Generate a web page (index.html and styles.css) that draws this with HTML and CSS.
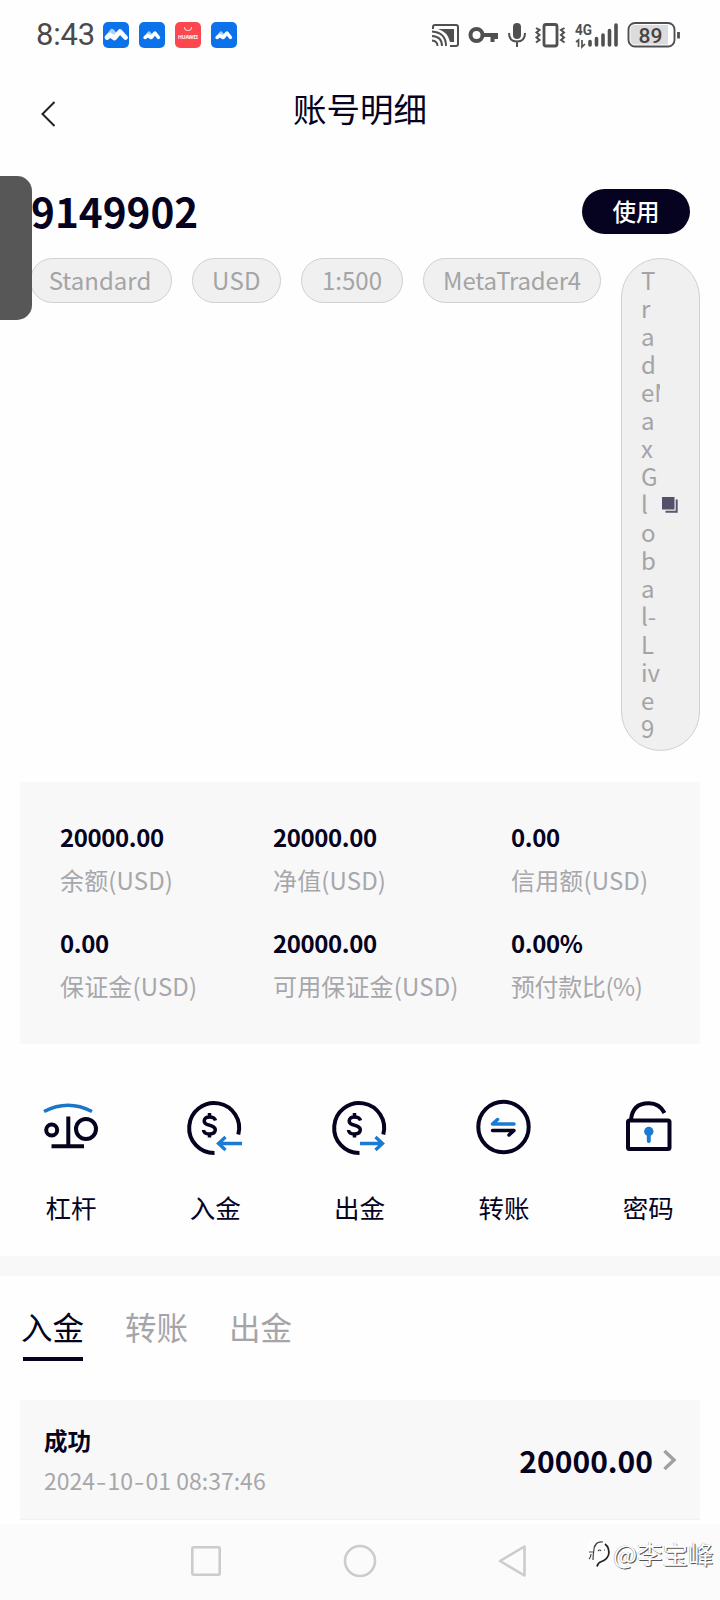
FILE: index.html
```html
<!DOCTYPE html>
<html lang="zh-CN">
<head>
<meta charset="utf-8">
<title>账号明细</title>
<link rel="stylesheet" href="styles.css">
</head>
<body>
<div class="screen">
  <div class="status">
    <span class="clock">8:43</span>
    <div class="apps">
      <svg width="26" height="26" viewBox="0 0 26 26"><rect width="26" height="26" rx="5" fill="#0b72ea"/><path d="M4.500 15 9 9.500l4 4.500" fill="none" stroke="#a9d2fb" stroke-width="5" stroke-linejoin="round" stroke-linecap="round"/><path d="M4 15.500 7 13l4.500 3 5.500-6.500 5.500 6" fill="none" stroke="#fff" stroke-width="4.800" stroke-linejoin="round" stroke-linecap="round"/></svg>
      <svg width="26" height="26" viewBox="0 0 26 26"><rect width="26" height="26" rx="5" fill="#0b72ea"/><path d="M6.500 15.500 10 11l3 4" fill="none" stroke="#a9d2fb" stroke-width="3.200" stroke-linejoin="round" stroke-linecap="round"/><path d="M6 15.500 8.500 13.500l3.500 2 4-4.500 3.500 4.500" fill="none" stroke="#fff" stroke-width="3.400" stroke-linejoin="round" stroke-linecap="round"/></svg>
      <svg width="26" height="26" viewBox="0 0 26 26"><rect width="26" height="26" rx="5" fill="#fb474d"/><path d="M9.500 5a3.500 3.500 0 0 0 7 0" fill="none" stroke="#ffd0d0" stroke-width="1.100"/><text class="huawei" x="3" y="17" textLength="20">HUAWEI</text></svg>
      <svg width="26" height="26" viewBox="0 0 26 26"><rect width="26" height="26" rx="5" fill="#0b72ea"/><path d="M6.500 15.500 10 11l3 4" fill="none" stroke="#a9d2fb" stroke-width="3.200" stroke-linejoin="round" stroke-linecap="round"/><path d="M6 15.500 8.500 13.500l3.500 2 4-4.500 3.500 4.500" fill="none" stroke="#fff" stroke-width="3.400" stroke-linejoin="round" stroke-linecap="round"/></svg>
    </div>
    <svg class="system" width="252" height="32" viewBox="430 18 252 32">
      <g fill="none" stroke="#505050" stroke-width="2">
        <path d="M433 28v-2q0-2 2-2h21q2 0 2 2v17q0 2-2 2h-6"/>
        <path d="M432 30.500q14 1 14 14.500M432 35q10 .5 10 10M432 39.500q5.500 .5 5.500 5.500" stroke-width="1.900"/>
        <path d="M438 28h16v13h-4q-2-10-12-13z" fill="#505050" stroke="none"/>
        <circle cx="476.500" cy="34" r="6" stroke-width="4"/>
        <path d="M482 34h16M492.500 34v7M496 34v4" stroke-width="4"/>
        <rect x="513" y="22" width="8" height="16" rx="4" fill="#505050" stroke="none"/>
        <path d="M509 32q0 8.500 8 8.500t8-8.500M517 40v6" stroke-width="2"/>
        <rect x="544" y="23.500" width="13" height="21.500" rx="2" stroke-width="2.800"/>
        <path d="M536 27l3.500 2-3 2.500 3 2.500-3 2.500 3 2.500-3.500 2.500M564.500 27l-3.500 2 3 2.500-3 2.500 3 2.500-3 2.500 3.500 2.500" stroke-width="2"/>
        <path d="M576 41l2.500-2v7M582 39v7l3-3" stroke-width="1.700"/>
        <path d="M590 40.500v3.500M596.500 37.500v6.500M603 34v10M609.500 29.500v14.500M616 24v20" stroke-width="3.600" stroke-linecap="round"/>
        <rect x="628.500" y="22" width="46" height="23.500" rx="6.500" fill="#fff" stroke-width="1.900"/>
        <path d="M635 24h33v19.500h-33q-4.500 0-4.500-4.500V28.500q0-4.500 4.500-4.500z" fill="#dcdcdc" stroke="none"/>
        <path d="M678.500 31v6.500" stroke-width="2.800"/>
      </g>
      <text class="net" x="575" y="34" textLength="17" lengthAdjust="spacingAndGlyphs">4G</text>
      <text class="battery" x="638.500" y="41.500" textLength="24">89</text>
    </svg>
  </div>

  <div class="header">
    <svg class="back" width="20" height="28" viewBox="0 0 20 28"><path d="M16.500 2 4.500 14l12 12" fill="none" stroke="#222" stroke-width="2"/></svg>
    <h1 class="title">账号明细</h1>
  </div>

  <div class="account">
    <div class="account-no">9149902</div>
    <button class="use">使用</button>
  </div>

  <div class="chips">
    <span class="chip chip-type">Standard</span>
    <span class="chip chip-cur">USD</span>
    <span class="chip chip-lev">1:500</span>
    <span class="chip chip-platform">MetaTrader4</span>
    <div class="chip chip-server">
      <div class="server">T<br>r<br>a<br>d<br>eM<br>a<br>x<br>G<br>l<br>o<br>b<br>a<br>l-<br>L<br>iv<br>e<br>9</div>
      <svg class="copy" width="17" height="17" viewBox="0 0 17 17"><path d="M0 0h12.500v12.500H0z" fill="#555069"/><path d="M14.700 2.500v12.200H3.500" fill="none" stroke="#5b5670" stroke-width="2"/></svg>
    </div>
  </div>

  <div class="stats">
    <div class="stat"><b>20000.00</b><span>余额(USD)</span></div>
    <div class="stat"><b>20000.00</b><span>净值(USD)</span></div>
    <div class="stat"><b>0.00</b><span>信用额(USD)</span></div>
    <div class="stat"><b>0.00</b><span>保证金(USD)</span></div>
    <div class="stat"><b>20000.00</b><span>可用保证金(USD)</span></div>
    <div class="stat"><b>0.00%</b><span class="ratio">预付款比(%)</span></div>
  </div>

  <div class="actions">
    <div class="action">
      <svg width="60" height="60" viewBox="0 0 60 60" fill="none" stroke="#05031f" stroke-width="4"><path d="M3 13.500q24-12.500 48 0" stroke="#1c76c8" stroke-width="3.500"/><circle cx="10.700" cy="32" r="5.500"/><circle cx="45" cy="31" r="10"/><path d="M27.300 18.500V48M10.500 48.200H43"/></svg>
      <span>杠杆</span>
    </div>
    <div class="action">
      <svg width="60" height="60" viewBox="0 0 60 60" fill="none" stroke="#05031f" stroke-width="4"><path d="M53.300 36.500A25 25 0 1 0 29.500 55"/><path d="M30.500 22.500Q29.500 19 24.500 19t-5.300 4q0 3 5.300 4.200t5.800 4.300q0 4.500-5.800 4.500t-6-4M24.500 15v5M24.500 35v4.500" stroke-width="3.500"/><path d="M57 45.500H34M40.500 39l-7 6.500 7 6.500" stroke="#1b7bd2" stroke-width="3.300"/></svg>
      <span>入金</span>
    </div>
    <div class="action">
      <svg width="60" height="60" viewBox="0 0 60 60" fill="none" stroke="#05031f" stroke-width="4"><path d="M53.300 36.500A25 25 0 1 0 29.500 55"/><path d="M30.500 22.500Q29.500 19 24.500 19t-5.300 4q0 3 5.300 4.200t5.800 4.300q0 4.500-5.800 4.500t-6-4M24.500 15v5M24.500 35v4.500" stroke-width="3.500"/><path d="M30 45.500H52M45.500 39l7 6.500-7 6.500" stroke="#1b7bd2" stroke-width="3.300"/></svg>
      <span>出金</span>
    </div>
    <div class="action">
      <svg width="60" height="60" viewBox="0 0 60 60" fill="none" stroke="#05031f" stroke-width="4"><circle cx="29.500" cy="29" r="25.200"/><path d="M40 26H18.500l5-4.500" stroke="#1b7bd2" stroke-width="3.500" stroke-linecap="round" stroke-linejoin="round"/><path d="M18.500 32.500H40l-5 4.500" stroke-width="3.500" stroke-linecap="round" stroke-linejoin="round"/></svg>
      <span>转账</span>
    </div>
    <div class="action">
      <svg width="60" height="60" viewBox="0 0 60 60" fill="none" stroke="#05031f" stroke-width="4"><rect x="10" y="22.500" width="41.500" height="28.500" rx="1.500"/><path d="M13 22Q14.500 5 31 5.300 41.500 5.300 46.500 15"/><circle cx="30.800" cy="33.500" r="4.700" fill="#1b7bd2" stroke="none"/><path d="M30.800 35v8" stroke="#1b7bd2" stroke-linecap="round"/></svg>
      <span>密码</span>
    </div>
  </div>

  <div class="divider"></div>

  <div class="tabs">
    <span class="tab tab-active">入金</span>
    <span class="tab">转账</span>
    <span class="tab">出金</span>
  </div>

  <div class="record">
    <div class="record-info"><b>成功</b><time>2024<i>-</i>10<i>-</i>01 08:37:46</time></div>
    <div class="amount">20000.00</div>
    <svg width="14" height="22" viewBox="0 0 14 22"><path d="M1.500 2l9.500 9-9.500 9" fill="none" stroke="#a0a0a3" stroke-width="3.400"/></svg>
  </div>

  <div class="nav">
    <svg width="32" height="36" viewBox="0 0 32 36"><rect x="2.300" y="4.300" width="27.400" height="27.400" rx="1.500" fill="none" stroke="#ccc" stroke-width="2.600"/></svg>
    <svg width="36" height="36" viewBox="0 0 36 36"><circle cx="18" cy="18" r="15" fill="none" stroke="#ccc" stroke-width="2.600"/></svg>
    <svg width="32" height="36" viewBox="0 0 32 36"><path d="M27.500 3.500v29L3 18z" fill="none" stroke="#ccc" stroke-width="2.600" stroke-linejoin="round"/></svg>
  </div>

  <div class="handle"></div>
  <div class="watermark">
    <svg width="28" height="32" viewBox="0 0 28 32"><path d="M4 5q5-5 12-3 9 2 9 12 0 8-9 10-2 3-4 3l1-4Q2 21 3 10z" fill="#fff"/><path d="M20 7q5 4 3.500 11-2 5-7 6.500-3.500 1-4.500 5" fill="none" stroke="#222" stroke-width="1.700"/><path d="M18 5q-8-1-9 7-1 7-1 11M4 15h4M9 11l3-5M6 17q0 3-2 5M13 14q2-2 3 0M19 13h1" fill="none" stroke="#444" stroke-width="1.200"/></svg>
    <span>@李宝峰</span>
  </div>
</div>
</body>
</html>
```

FILE: styles.css
```css
* { box-sizing: border-box; }
body {
  margin: 0;
  background: #fefefe;
  color: #05031f;
  font-family: "Noto Sans CJK SC", "Noto Sans", sans-serif;
}
svg { display: block; flex: none; }
.screen {
  position: relative;
  width: 720px;
  height: 1600px;
  overflow: hidden;
  display: flex;
  flex-direction: column;
}
.screen > * { flex: none; }

.status {
  height: 70px;
  padding: 0 38px 0 36px;
  display: flex;
  align-items: center;
}
.clock {
  width: 67px;
  font: 400 31px/40px Roboto, sans-serif;
  letter-spacing: -0.2px;
  color: #4a4a4a;
}
.apps { display: flex; gap: 10px; }
.system { margin-left: auto; }
.huawei { font: 700 5px "Noto Sans", sans-serif; fill: #fff; }
.net { font: 700 15px Roboto, sans-serif; fill: #505050; }
.battery { font: 500 21px Roboto, sans-serif; fill: #444; }

.header {
  height: 106px;
  padding: 16px 38px 0;
  display: grid;
  grid-template-columns: 40px 1fr 40px;
}
.back { margin-top: 14px; }
.title {
  margin: 0;
  font-size: 33.5px;
  font-weight: 400;
  line-height: 44px;
  text-align: center;
}

.account {
  height: 82px;
  padding: 13px 30px 24px;
  display: flex;
  justify-content: space-between;
  align-items: center;
}
.account-no {
  padding-left: 1px;
  font-size: 40.5px;
  font-weight: 700;
  line-height: 43px;
  margin-top: -2px;
}
.use {
  width: 108px;
  height: 45px;
  border: 0;
  border-radius: 23px;
  background: #05031f;
  color: #fff;
  font: 500 23.5px/45px "Noto Sans CJK SC", sans-serif;
  padding: 0;
}

.chips {
  height: 524px;
  padding: 0 20px 0 30px;
  display: flex;
  align-items: flex-start;
  gap: 20px;
}
.chip {
  height: 45px;
  border: 1px solid #d0d0d2;
  border-radius: 40px;
  background: #f0f0f1;
  color: #a4a4a6;
  font-size: 24px;
  line-height: 42px;
  text-align: center;
  white-space: nowrap;
}
.chip-type { width: 142px; padding-right: 2px; }
.chip-cur { width: 89px; letter-spacing: 0.3px; }
.chip-lev { width: 102px; }
.chip-platform { width: 178px; letter-spacing: -0.2px; }
.chip-server {
  width: 79px;
  height: 493px;
  padding: 8px 19px;
  display: flex;
  align-items: center;
  gap: 2px;
}
.server {
  width: 19px;
  overflow: hidden;
  line-height: 28px;
  text-align: left;
  margin-top: -2px;
}
.copy { margin-top: 2px; }

.stats {
  height: 262px;
  margin: 0 20px;
  padding: 37px 40px 0;
  display: grid;
  grid-template-columns: 213px 238px 1fr;
  grid-auto-rows: 106px;
  background: #f8f8f9;
}
.stat {
  display: flex;
  flex-direction: column;
  gap: 7px;
  white-space: nowrap;
}
.stat b { font-size: 24px; line-height: 36px; letter-spacing: -0.4px; }
.stat span { font-size: 24px; line-height: 36px; letter-spacing: 0.15px; color: #a7a7ab; }
.stat .ratio { letter-spacing: -0.4px; }

.actions {
  height: 212px;
  padding: 54px 0 0 41px;
  display: flex;
  gap: 84.300px;
}
.action {
  display: flex;
  flex-direction: column;
  align-items: center;
  gap: 31px;
  width: 60px;
}
.action span { font-size: 25.500px; line-height: 36px; white-space: nowrap; }

.divider { height: 20px; background: #f8f8f8; }

.tabs {
  height: 124px;
  padding: 28px 21px 0;
  display: flex;
  align-items: flex-start;
  gap: 41px;
}
.tab {
  height: 57px;
  font-size: 31.500px;
  line-height: 44px;
  color: #a5a5a9;
}
.tab-active {
  color: #05031f;
  background: linear-gradient(#05031f, #05031f) center bottom / 60px 4px no-repeat;
}

.record {
  height: 120px;
  margin: 0 20px;
  padding: 0 23px 0 24px;
  display: flex;
  align-items: center;
  background: #f8f8f9;
  border-bottom: 1px solid #f1f1f2;
}
.record-info { display: flex; flex-direction: column; gap: 4px; }
.record-info b { font-size: 23.500px; line-height: 36px; }
.record-info time { font-size: 23px; line-height: 36px; color: #a7a7aa; }
.record-info i { display: inline-block; width: 12.500px; font-style: normal; text-align: center; transform: scaleX(1.3); }
.amount {
  margin: 0 10px 0 auto;
  font-size: 30px;
  font-weight: 700;
  line-height: 44px;
}

.nav {
  height: 76px;
  margin-top: 4px;
  padding: 19px 191px 0 190px;
  display: flex;
  justify-content: space-between;
  background: #fbfbfb;
}

.handle {
  position: absolute;
  left: 0;
  top: 176px;
  width: 32px;
  height: 144px;
  border-radius: 0 15px 15px 0;
  background: #575757;
}
.watermark {
  position: absolute;
  left: 585px;
  top: 1536px;
  display: flex;
  align-items: center;
  color: #fff;
  font-size: 25.500px;
  line-height: 34px;
  white-space: nowrap;
  text-shadow: 1px 1px 0 #555, -0.5px -0.5px 0 #aaa;
}
```
